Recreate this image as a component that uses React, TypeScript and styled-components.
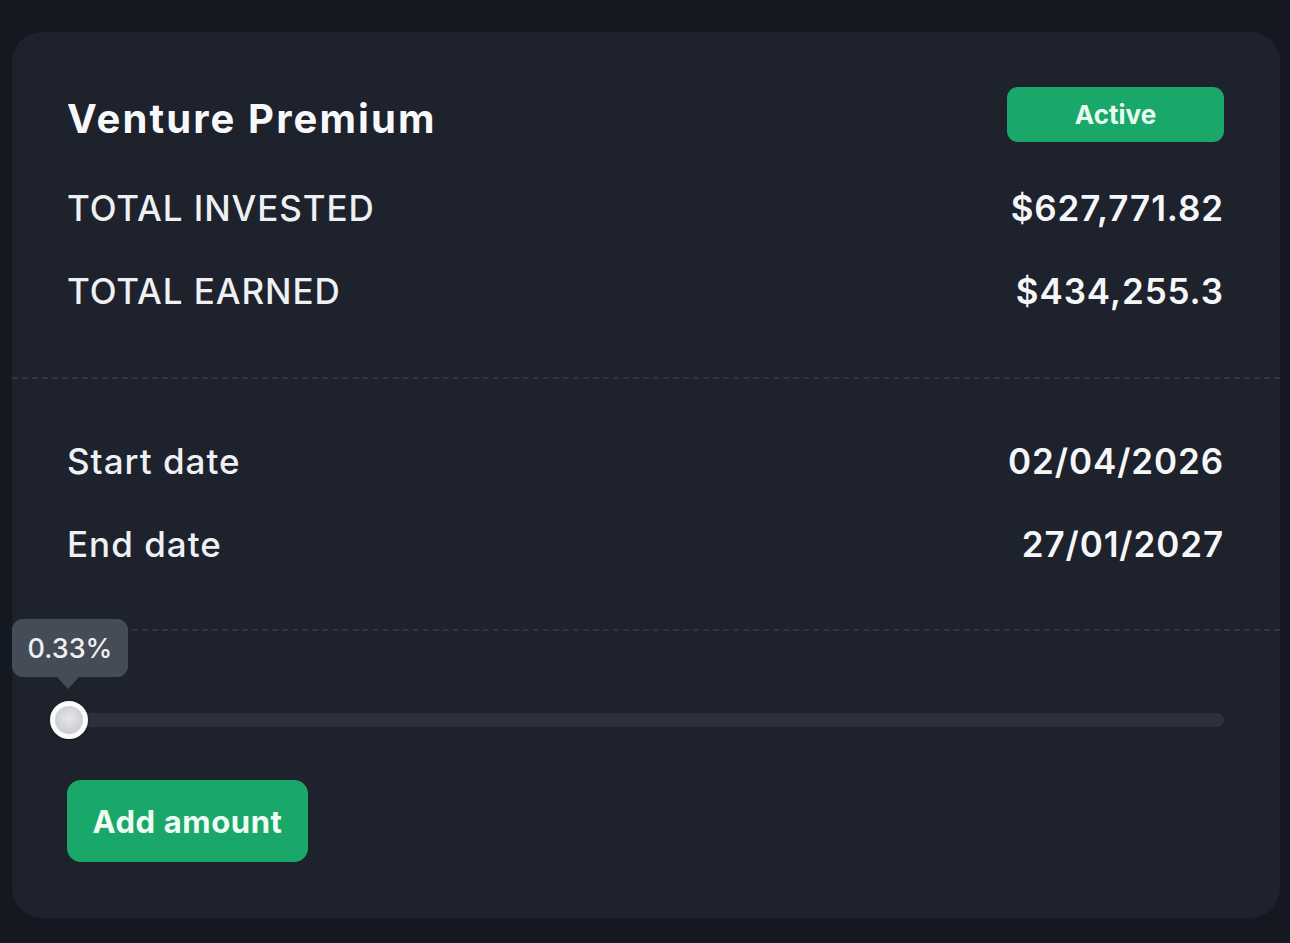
import React from "react";
import styled, { createGlobalStyle } from "styled-components";

const Global = createGlobalStyle`
  html, body { margin: 0; padding: 0; background: #141820; }
  body { font-family: Inter, "Noto Sans", sans-serif; color: #f2f3f5; }
  * { box-sizing: border-box; }
`;

const Page = styled.div`
  width: 1290px;
  height: 943px;
  padding: 32px 10px 25px 12px;
  background: #141820;
`;

const Card = styled.div`
  width: 1268px;
  height: 886px;
  background: #1d222c;
  border-radius: 30px;
  display: flex;
  flex-direction: column;
  overflow: hidden;
`;

const Section = styled.div<{ $top: number; $bottom: number }>`
  padding: ${(p) => p.$top}px 56px ${(p) => p.$bottom}px 55px;
  display: flex;
  flex-direction: column;
`;

const Divider = styled.div`
  height: 0;
  border-top: 2px dashed #2f3541;
`;

const HeaderRow = styled.div`
  height: 55px;
  display: flex;
  align-items: center;
  justify-content: space-between;
  margin-bottom: 24px;
`;

const Title = styled.h1`
  margin: 8px 0 0;
  font-size: 40px;
  font-weight: 700;
  letter-spacing: 2.1px;
  color: #f7f8fa;
`;

const Badge = styled.span`
  width: 217px;
  height: 55px;
  border-radius: 11px;
  background: #19a86a;
  display: flex;
  align-items: center;
  justify-content: center;
  font-size: 26px;
  font-weight: 700;
  color: #e9fbf1;
`;

const Row = styled.div`
  height: 83px;
  display: flex;
  align-items: center;
  justify-content: space-between;
`;

const Label = styled.span<{ $upper?: boolean }>`
  font-size: 35px;
  font-weight: 500;
  color: #eef0f3;
  letter-spacing: ${(p) => (p.$upper ? "0.9px" : "1px")};
`;

const Value = styled.span`
  font-size: 35px;
  font-weight: 600;
  color: #f5f6f8;
  letter-spacing: 0.9px;
`;

const SliderWrap = styled.div`
  position: relative;
  height: 36px;
  margin: 71px 0 42px;
  display: flex;
  align-items: center;
`;

const Track = styled.div`
  position: relative;
  width: 100%;
  height: 14px;
  margin-left: 1px;
  border-radius: 7px;
  background: #2b303a;
`;

const Thumb = styled.div`
  position: absolute;
  left: -18px;
  top: -12px;
  width: 38px;
  height: 38px;
  border-radius: 50%;
  background: radial-gradient(circle at 50% 45%, #e6e7ea 0%, #cfd1d6 60%, #c3c5ca 100%);
  border: 5px solid #fbfbfc;
  box-shadow: 0 1px 3px rgba(0, 0, 0, 0.4);
`;

const Tooltip = styled.div`
  position: absolute;
  left: -56px;
  top: -94px;
  width: 116px;
  height: 58px;
  border-radius: 11px;
  background: #464c57;
  display: flex;
  align-items: center;
  justify-content: center;
  font-size: 27px;
  font-weight: 500;
  color: #eef0f3;
  &::after {
    content: "";
    position: absolute;
    left: 45px;
    bottom: -12px;
    border-left: 11px solid transparent;
    border-right: 11px solid transparent;
    border-top: 12px solid #464c57;
  }
`;

const Button = styled.button`
  align-self: flex-start;
  width: 241px;
  height: 82px;
  border: none;
  border-radius: 14px;
  background: #19a86a;
  color: #eefcf4;
  font-family: Inter, "Noto Sans", sans-serif;
  font-size: 31px;
  font-weight: 700;
  letter-spacing: 0.6px;
  cursor: pointer;
`;

export default function App() {
  return (
    <>
      <Global />
      <Page>
        <Card>
          <Section $top={55} $bottom={45}>
            <HeaderRow>
              <Title>Venture Premium</Title>
              <Badge>Active</Badge>
            </HeaderRow>
            <Row>
              <Label $upper>TOTAL INVESTED</Label>
              <Value>$627,771.82</Value>
            </Row>
            <Row>
              <Label $upper>TOTAL EARNED</Label>
              <Value>$434,255.3</Value>
            </Row>
          </Section>
          <Divider />
          <Section $top={40} $bottom={44}>
            <Row>
              <Label>Start date</Label>
              <Value>02/04/2026</Value>
            </Row>
            <Row>
              <Label>End date</Label>
              <Value>27/01/2027</Value>
            </Row>
          </Section>
          <Divider />
          <Section $top={0} $bottom={0}>
            <SliderWrap>
              <Track>
                <Thumb />
                <Tooltip>0.33%</Tooltip>
              </Track>
            </SliderWrap>
            <Button>Add amount</Button>
          </Section>
        </Card>
      </Page>
    </>
  );
}
